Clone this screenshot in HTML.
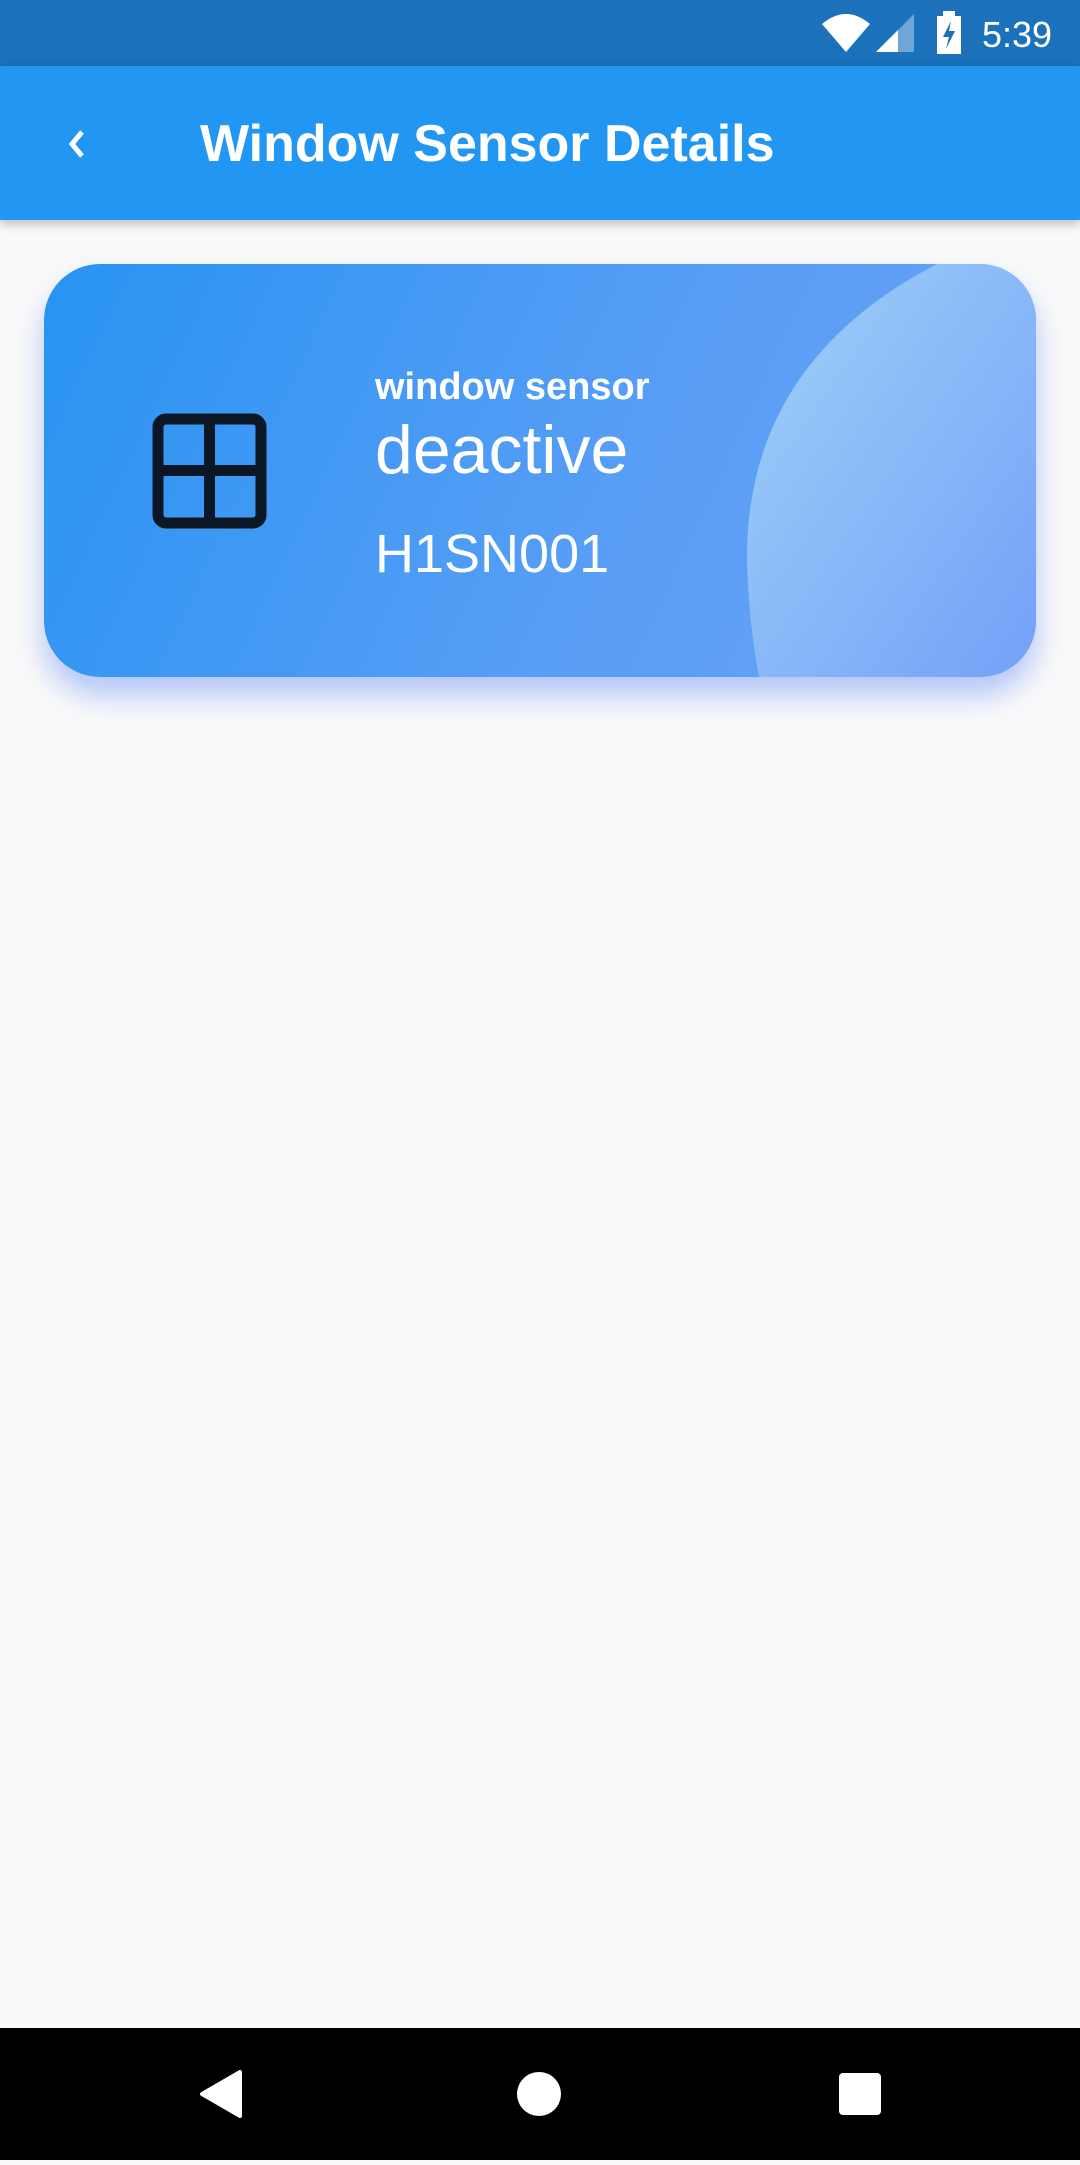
<!DOCTYPE html>
<html><head><style>
body{margin:0;width:1080px;height:2160px;background:#fafafa;font-family:"Liberation Sans",sans-serif;position:relative;overflow:hidden}
.sb{position:absolute;top:0;left:0;width:1080px;height:66px;background:#1b72bb}
.ab{position:absolute;top:66px;left:0;width:1080px;height:154px;background:#2196f3;box-shadow:0 4px 10px rgba(0,0,0,.25)}
.title{position:absolute;left:200px;top:48px;color:#fff;font-size:52px;font-weight:bold;letter-spacing:0}
.card{position:absolute;left:44px;top:264px;width:992px;height:413px;border-radius:56px;overflow:hidden;background:linear-gradient(115deg,#2894f2,#5a9ef6 60%,#6aa2f8);box-shadow:0 18px 30px rgba(90,130,245,.45)}
.t{position:absolute;color:#fff;left:331px;white-space:nowrap}
.nav{position:absolute;left:0;top:2028px;width:1080px;height:132px;background:#000}
</style></head><body>
<div class="sb">
<svg width="1080" height="66" style="position:absolute;left:0;top:0">
<path d="M822 24 Q846 4 870 24 L846 52 Z" fill="#fff"/>
<path d="M876 52 L914 14 L914 52 Z" fill="#6fa6d6"/>
<path d="M876 52 L898 30 L898 52 Z" fill="#fff"/>
<rect x="937" y="16" width="24" height="38" fill="#fff"/><rect x="943" y="11" width="12" height="6" fill="#fff"/>
<path d="M951 21 L943 37 L949 37 L946 49 L955 31 L949 31 Z" fill="#1b72bb"/>
<text x="982" y="47" fill="#fff" font-size="36" font-family="Liberation Sans">5:39</text>
</svg></div>
<div class="ab">
<svg width="40" height="40" style="position:absolute;left:58px;top:58px"><path d="M24 8 L14 20 L24 32" stroke="#fff" stroke-width="5" fill="none"/></svg>
<div class="title">Window Sensor Details</div>
</div>
<div class="card">
<svg width="992" height="413" style="position:absolute;left:0;top:0">
<defs><linearGradient id="g" x1="0" y1="0" x2="1" y2="1"><stop offset="0" stop-color="#9fd2f8"/><stop offset="1" stop-color="#74a0f8"/></linearGradient></defs>
<path d="M893 0 Q700 100 703 300 Q705 360 715 413 L992 413 L992 0 Z" fill="url(#g)"/>
<rect x="114" y="155" width="103" height="104" rx="8" fill="none" stroke="#0b1724" stroke-width="11"/>
<rect x="160" y="155" width="11" height="104" fill="#0b1724"/>
<rect x="114" y="201" width="103" height="11" fill="#0b1724"/>
</svg>
<div class="t" style="top:102px;font-size:38px;font-weight:bold">window sensor</div>
<div class="t" style="top:147px;font-size:68px">deactive</div>
<div class="t" style="top:259px;font-size:54px">H1SN001</div>
</div>
<div class="nav">
<svg width="1080" height="132">
<path d="M240 44 L240 88 L202 66 Z" fill="#fff" stroke="#fff" stroke-width="4" stroke-linejoin="round"/>
<circle cx="539" cy="66" r="22" fill="#fff"/>
<rect x="839" y="45" width="42" height="42" rx="4" fill="#fff"/>
</svg></div>
</body></html>
